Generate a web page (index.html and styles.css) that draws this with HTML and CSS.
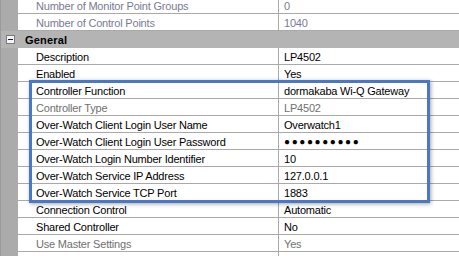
FILE: index.html
```html
<!DOCTYPE html>
<html lang="en">
<head>
  <meta charset="UTF-8" />
  <title>Controller Properties</title>
  <link rel="stylesheet" href="styles.css">
</head>
<body>
  <div class="grid">
    <div class="row ro"><div class="gutter"></div><div class="name">Number of Monitor Point Groups</div><div class="val">0</div></div>
    <div class="row ro"><div class="gutter"></div><div class="name">Number of Control Points</div><div class="val">1040</div></div>
    <div class="cat"><span class="toggle"></span>General</div>
    <div class="row"><div class="gutter"></div><div class="name">Description</div><div class="val">LP4502</div></div>
    <div class="row"><div class="gutter"></div><div class="name">Enabled</div><div class="val">Yes</div></div>
    <div class="row"><div class="gutter"></div><div class="name">Controller Function</div><div class="val">dormakaba Wi-Q Gateway</div></div>
    <div class="row off"><div class="gutter"></div><div class="name">Controller Type</div><div class="val">LP4502</div></div>
    <div class="row"><div class="gutter"></div><div class="name">Over-Watch Client Login User Name</div><div class="val">Overwatch1</div></div>
    <div class="row"><div class="gutter"></div><div class="name">Over-Watch Client Login User Password</div><div class="val dots">●●●●●●●●●●</div></div>
    <div class="row"><div class="gutter"></div><div class="name">Over-Watch Login Number Identifier</div><div class="val">10</div></div>
    <div class="row"><div class="gutter"></div><div class="name">Over-Watch Service IP Address</div><div class="val">127.0.0.1</div></div>
    <div class="row"><div class="gutter"></div><div class="name">Over-Watch Service TCP Port</div><div class="val">1883</div></div>
    <div class="row"><div class="gutter"></div><div class="name">Connection Control</div><div class="val">Automatic</div></div>
    <div class="row"><div class="gutter"></div><div class="name">Shared Controller</div><div class="val">No</div></div>
    <div class="row off"><div class="gutter"></div><div class="name">Use Master Settings</div><div class="val">Yes</div></div>
    <div class="row filler"><div class="gutter"></div><div class="name"></div><div class="val"></div></div>

    <!-- callout drawn over the Over-Watch rows -->
    <div class="highlight"></div>
  </div>
</body>
</html>
```

FILE: styles.css
```css
body {
  margin: 0;
  font-family: 'Liberation Sans', Arial, sans-serif;
  font-size: 11px;
  letter-spacing: -0.2px;
  color: #000;
  background: #fff;
  overflow: hidden;
}
.grid {
  position: relative;
  margin-top: -3px;
  border-left: 1px solid #9a9a9a;
}
.row {
  display: flex;
  height: 17px;
}
.gutter {
  width: 17px;
  flex: none;
  background: #ababab;
}
.name {
  width: 242px;
  height: 16px;
  flex: none;
  padding-left: 18px;
  line-height: 18px;
  border-bottom: 1px solid #a9a9a9;
  border-right: 1px solid #a9a9a9;
  white-space: nowrap;
  overflow: hidden;
}
.val {
  flex: 1;
  height: 16px;
  padding-left: 5px;
  line-height: 18px;
  border-bottom: 1px solid #a9a9a9;
  white-space: nowrap;
  overflow: hidden;
}
.dots {
  font-size: 10px;
  letter-spacing: 1.6px;
}
.ro .name,
.ro .val {
  color: #7a7a92;
}
.off .name,
.off .val {
  color: #707070;
}
.filler {
  height: 6px;
}
.filler .name,
.filler .val {
  border-bottom: none;
}
.cat {
  height: 17px;
  line-height: 18px;
  background: #b4b4b4;
  font-weight: bold;
  letter-spacing: 0.2px;
  display: flex;
  align-items: center;
  padding-left: 5px;
}
.toggle {
  width: 7px;
  height: 7px;
  border: 1px solid #7a7a7a;
  background: #f4f4f4;
  margin-right: 10px;
  position: relative;
}
.toggle::after {
  content: '';
  position: absolute;
  left: 1px;
  top: 3px;
  width: 5px;
  height: 1px;
  background: #1a1a4a;
}
.highlight {
  position: absolute;
  left: 28px;
  top: 83px;
  width: 395px;
  height: 117px;
  border: 3px solid #4a78c6;
  box-shadow: 1px 1px 4px rgba(0, 0, 0, 0.35);
}
```
